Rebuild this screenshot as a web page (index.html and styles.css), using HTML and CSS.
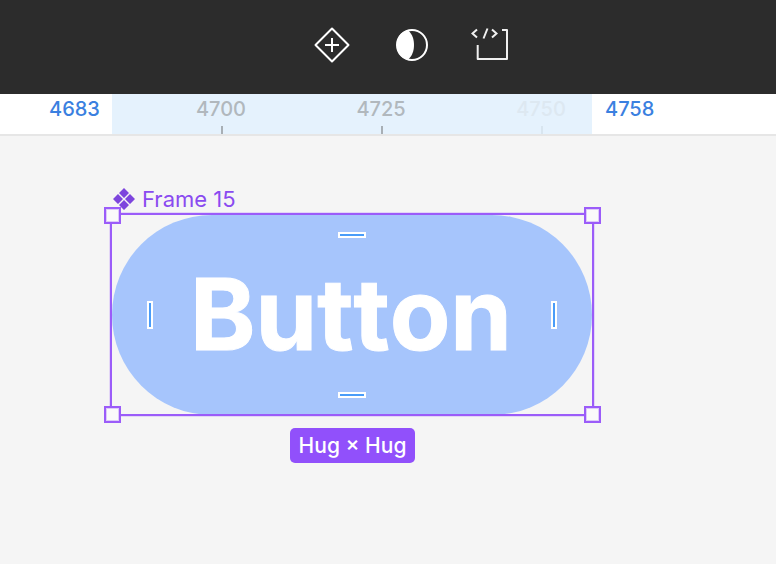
FILE: index.html
```html
<!DOCTYPE html>
<html lang="en">
<head>
<meta charset="utf-8">
<title>Frame 15</title>
<link rel="stylesheet" href="styles.css">
</head>
<body>
<header class="toolbar">
  <svg class="tool tool-component" width="36" height="36" viewBox="0 0 36 36" fill="none" stroke="#fff">
    <path d="M18 1.500 34.500 18 18 34.500 1.500 18Z" stroke-width="2" stroke-linejoin="round"/>
    <path d="M18 11v14M11 18h14" stroke-width="2"/>
  </svg>
  <svg class="tool tool-contrast" width="34" height="34" viewBox="0 0 34 34" fill="none">
    <circle cx="17" cy="17" r="15" stroke="#fff" stroke-width="2"/>
    <path d="M13 2.300C6 3.500 2 9.500 2 17s4 13.500 11 14.700C17.500 27.500 19 22.500 19 17S17.500 6.500 13 2.300Z" fill="#fff"/>
  </svg>
  <svg class="tool tool-dev" width="38" height="34" viewBox="0 0 38 34" fill="none" stroke="#f0f0f0" stroke-width="2">
    <path d="M6 2.500 1.500 6.500 6 10.500M21 2.500 25.500 6.500 21 10.500M12.500 11.500 16.500 1.500"/>
    <path d="M31 3h5v29H6.700V18" stroke-linejoin="round"/>
  </svg>
</header>
<div class="ruler">
  <div class="ruler-band"></div>
  <span class="ruler-label ruler-edge edge-start">4683</span>
  <span class="ruler-label mark mark-1">4700</span>
  <span class="ruler-label mark mark-2">4725</span>
  <span class="ruler-label mark mark-3">4750</span>
  <span class="ruler-label ruler-edge edge-end">4758</span>
  <i class="tick tick-1"></i>
  <i class="tick tick-2"></i>
  <i class="tick tick-3"></i>
</div>
<main class="canvas">
  <div class="frame-label">
    <svg width="24" height="24" viewBox="0 0 24 24" fill="#7d45dd">
      <path d="M12 1 17 6 12 11 7 6ZM6 7 11 12 6 17 1 12ZM18 7 23 12 18 17 13 12ZM12 13 17 18 12 23 7 18Z"/>
    </svg>
    <span>Frame 15</span>
  </div>
  <div class="button-pill">Button</div>
  <div class="selection"></div>
  <i class="handle h-tl"></i>
  <i class="handle h-tr"></i>
  <i class="handle h-bl"></i>
  <i class="handle h-br"></i>
  <i class="pad pad-h pad-top"></i>
  <i class="pad pad-h pad-bottom"></i>
  <i class="pad pad-v pad-left"></i>
  <i class="pad pad-v pad-right"></i>
  <div class="size-badge">Hug × Hug</div>
</main>
</body>
</html>
```
FILE: styles.css
```css
* { box-sizing: border-box; }
html, body { margin: 0; height: 100%; overflow: hidden; }
body {
  width: 776px;
  height: 564px;
  display: flex;
  flex-direction: column;
  background: #f5f5f5;
  font-family: Inter, "Liberation Sans", sans-serif;
}
.toolbar {
  flex: 0 0 94px;
  background: #2c2c2c;
  position: relative;
}
.tool { position: absolute; }
.tool-component { left: 314px; top: 27px; }
.tool-contrast { left: 395px; top: 28px; }
.tool-dev { left: 471px; top: 27px; }

.ruler {
  flex: 0 0 42px;
  position: relative;
  background: #fff;
  border-bottom: 2px solid #e6e6e6;
}
.ruler-band {
  position: absolute;
  left: 112px;
  top: 0;
  width: 480px;
  height: 40px;
  background: #e5f2fd;
}
.ruler-label {
  position: absolute;
  top: 3px;
  font-size: 20px;
  line-height: 24px;
  white-space: nowrap;
}
.ruler-edge { color: #3a80e0; font-weight: 500; }
.edge-start { left: 49px; }
.edge-end { left: 605px; }
.mark { width: 80px; text-align: center; color: #b1b8bd; font-weight: 500; }
.mark-1 { left: 181px; }
.mark-2 { left: 341px; }
.mark-3 { left: 501px; color: #dde8f1; }
.tick {
  position: absolute;
  top: 32px;
  width: 2px;
  height: 8px;
  background: #a8afb5;
}
.tick-1 { left: 221px; }
.tick-2 { left: 381px; }
.tick-3 { left: 541px; background: #d8e5ef; }

.canvas { flex: 1; position: relative; }
.frame-label {
  position: absolute;
  left: 112px;
  top: 50px;
  display: flex;
  align-items: center;
  gap: 6px;
  color: #8a4af0;
  font-size: 22px;
  line-height: 26px;
  font-weight: 400;
}
.button-pill {
  position: absolute;
  left: 112px;
  top: 79px;
  width: 480px;
  height: 200px;
  padding: 0 2px 2px 0;
  border-radius: 100px;
  background: #a6c5fc;
  color: #fff;
  display: flex;
  align-items: center;
  justify-content: center;
  font-size: 99px;
  font-weight: 700;
  line-height: 1;
  -webkit-text-stroke: 1px #fff;
  font-kerning: none;
  font-variant-ligatures: none;
  font-feature-settings: "calt" 0, "kern" 0;
}
.selection {
  position: absolute;
  left: 110px;
  top: 77px;
  width: 484px;
  height: 203px;
  border: 2px solid #9b5cf9;
  box-shadow: 0 0 0 1px rgba(155, 92, 249, .2);
}
.handle {
  position: absolute;
  width: 17px;
  height: 17px;
  background: #fafafa;
  border: 2px solid #9b5cf9;
  box-shadow: inset 0 0 0 1px rgba(155, 92, 249, .3);
}
.h-tl { left: 104px; top: 71px; }
.h-tr { left: 584px; top: 71px; }
.h-bl { left: 104px; top: 270px; }
.h-br { left: 584px; top: 270px; }
.pad {
  position: absolute;
  background: #4a9cf8;
  border: 2px solid #fff;
}
.pad-h { width: 28px; height: 6px; left: 338px; }
.pad-v { width: 6px; height: 28px; top: 165px; }
.pad-top { top: 96px; }
.pad-bottom { top: 256px; }
.pad-left { left: 147px; }
.pad-right { left: 551px; }
.size-badge {
  position: absolute;
  left: 290px;
  top: 292px;
  width: 125px;
  height: 35px;
  border-radius: 5px;
  background: #9150fb;
  color: #fff;
  font-size: 21px;
  font-weight: 500;
  line-height: 35px;
  text-align: center;
  white-space: nowrap;
}
```
